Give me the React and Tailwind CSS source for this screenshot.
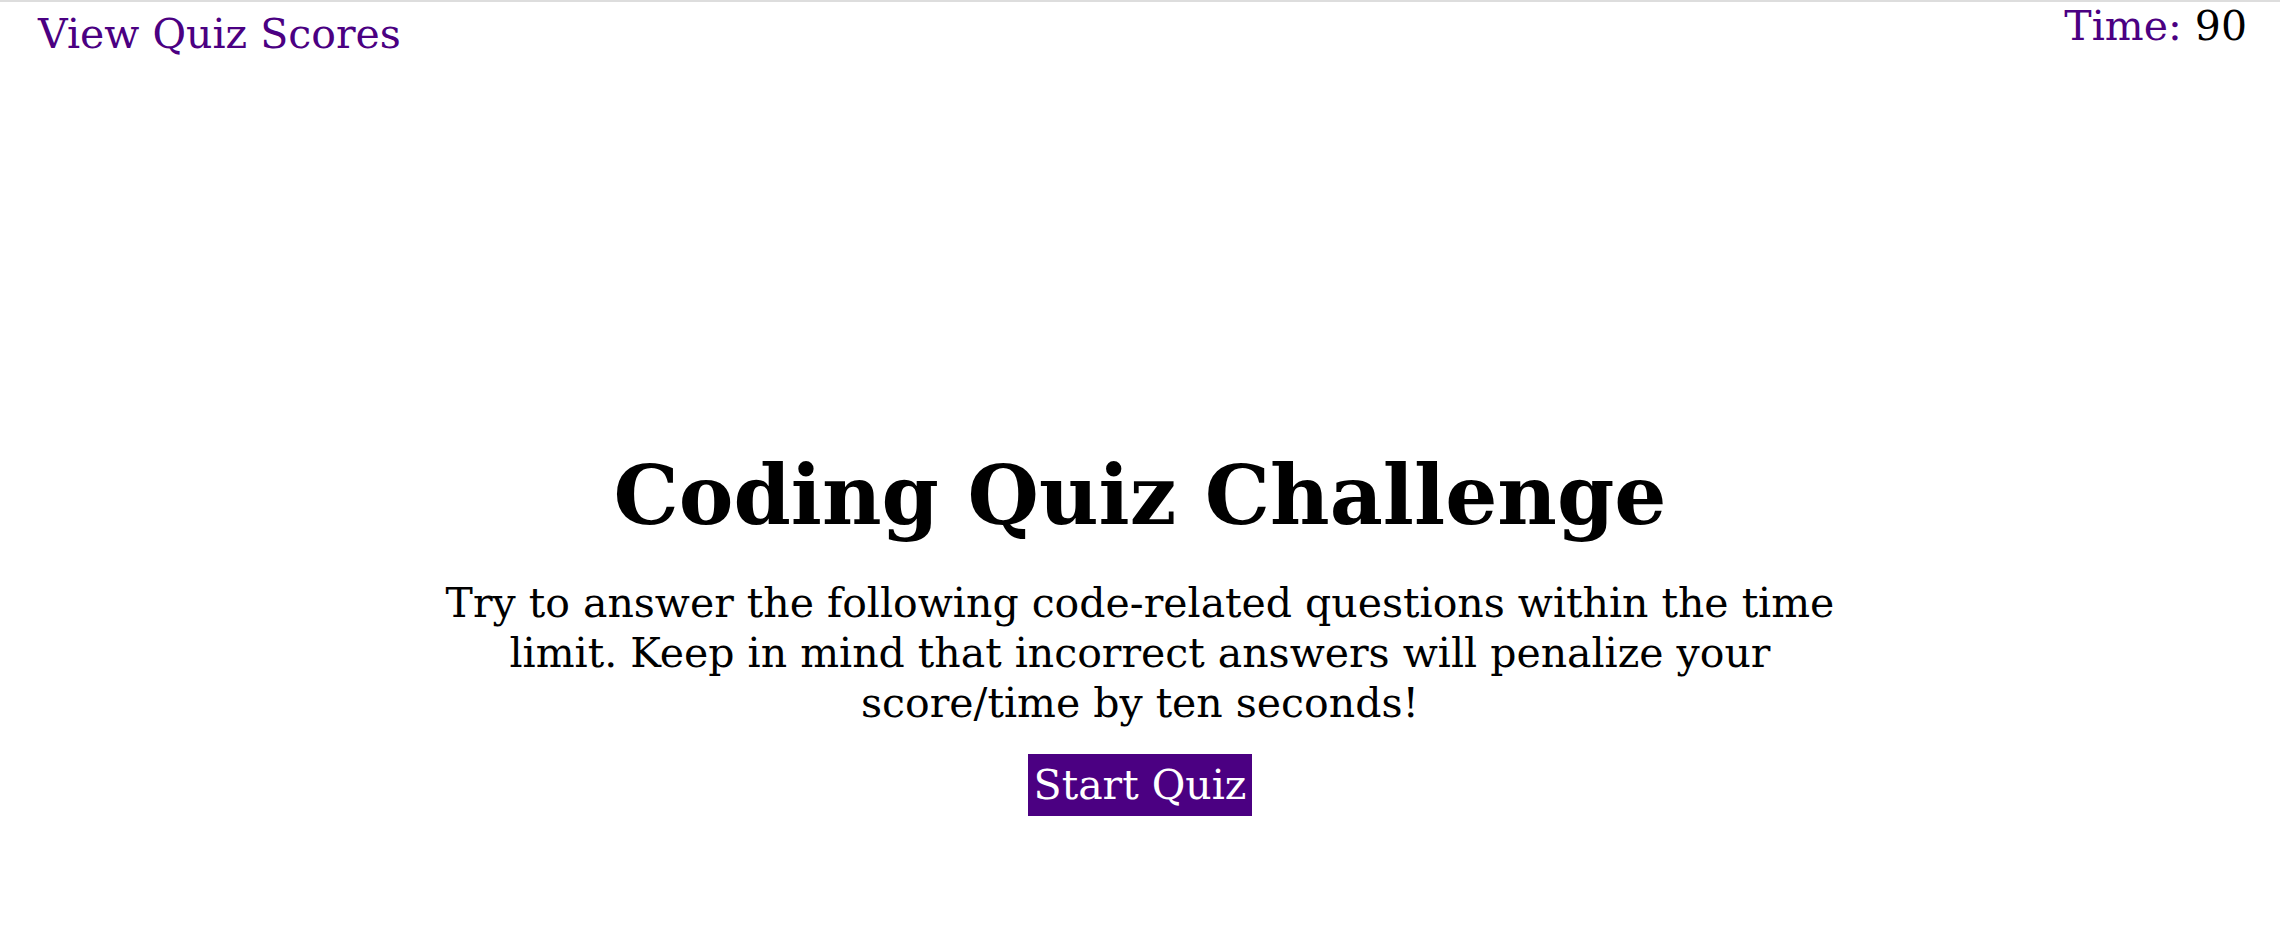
export default function App() {
  return (
    <div className="min-h-[928px] w-full bg-white border-t-2 border-[#dddddd]" style={{ fontFamily: '"DejaVu Serif", Georgia, serif' }}>
      <header className="flex justify-between items-start pl-[38px] pr-[33px]">
        <a className="text-[41px] leading-[56px] pt-[4px] text-[#4b0082]">View Quiz Scores</a>
        <div className="text-[41px] leading-[48px] text-black">
          <span className="text-[#4b0082]">Time:</span> 90
        </div>
      </header>
      <main className="flex flex-col items-center text-center pt-[378px]">
        <h1 className="text-[82px] leading-[110px] font-bold text-black">Coding Quiz Challenge</h1>
        <p className="mt-[28px] text-[41px] leading-[50px] text-black max-w-[1440px]">
          Try to answer the following code-related questions within the time limit. Keep in mind that incorrect answers will penalize your score/time by ten seconds!
        </p>
        <button className="mt-[26px] bg-[#4b0082] text-white text-[41px] leading-[62px] px-[6px]">Start Quiz</button>
      </main>
    </div>
  );
}
